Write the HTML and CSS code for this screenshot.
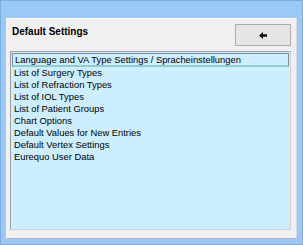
FILE: index.html
```html
<!DOCTYPE html>
<html lang="en">
<head>
  <meta charset="UTF-8" />
  <title>Default Settings</title>
  <link rel="stylesheet" href="styles.css">
</head>
<body>
  <div class="window">
    <div class="panel">
      <div class="head">
        <h1 class="title">Default Settings</h1>
        <button class="back-btn" type="button" aria-label="Back">
          <svg width="9" height="7" viewBox="0 0 9 7"><path d="M0 3.5 L4 0 L4 2.3 L8 2.3 L8 4.7 L4 4.7 L4 7 Z" fill="#111"/></svg>
        </button>
      </div>
      <ul class="list">
        <li class="item selected">Language and VA Type Settings / Spracheinstellungen</li>
        <li class="item">List of Surgery Types</li>
        <li class="item">List of Refraction Types</li>
        <li class="item">List of IOL Types</li>
        <li class="item">List of Patient Groups</li>
        <li class="item">Chart Options</li>
        <li class="item">Default Values for New Entries</li>
        <li class="item">Default Vertex Settings</li>
        <li class="item">Eurequo User Data</li>
      </ul>
    </div>
  </div>
</body>
</html>
```

FILE: styles.css
```css
body {
  margin: 0;
  font-family: "Liberation Sans", Arial, sans-serif;
  font-size: 9.4px;
  color: #000;
}
.window {
  width: 303px;
  height: 245px;
  box-sizing: border-box;
  background: #99c9f4;
  border: 1px solid #79ade6;
  padding: 17px 5px 5px 5px;
}
.panel {
  height: 100%;
  box-sizing: border-box;
  background: #f0f0f0;
  border: 1px solid #fafafa;
  border-right-color: #d8d8de;
  border-bottom-color: #b7b0c8;
  padding: 5px 5px 8px 3px;
  display: flex;
  flex-direction: column;
}
.head {
  display: flex;
  justify-content: space-between;
  align-items: flex-start;
  height: 27px;
}
.title {
  margin: 2px 0 0 2px;
  font-size: 10px;
  font-weight: bold;
}
.back-btn {
  width: 56px;
  height: 22px;
  margin: 0;
  padding: 0;
  background: #e6e6e6;
  border: 1px solid #adadad;
  display: flex;
  align-items: center;
  justify-content: center;
}
.list {
  flex: 1;
  margin: 0;
  padding: 1px 1px;
  list-style: none;
  background: #cdeeff;
  border: 1px solid #a0a0a0;
  border-right-color: #d0d0d0;
  border-bottom-color: #d0d0d0;
}
.item {
  height: 12px;
  line-height: 12px;
  padding-left: 2px;
  white-space: nowrap;
}
.selected {
  height: 11px;
  line-height: 11px;
  border: 1px solid #7f8f9c;
  border-bottom: 2px solid #8fcdcd;
}
```
